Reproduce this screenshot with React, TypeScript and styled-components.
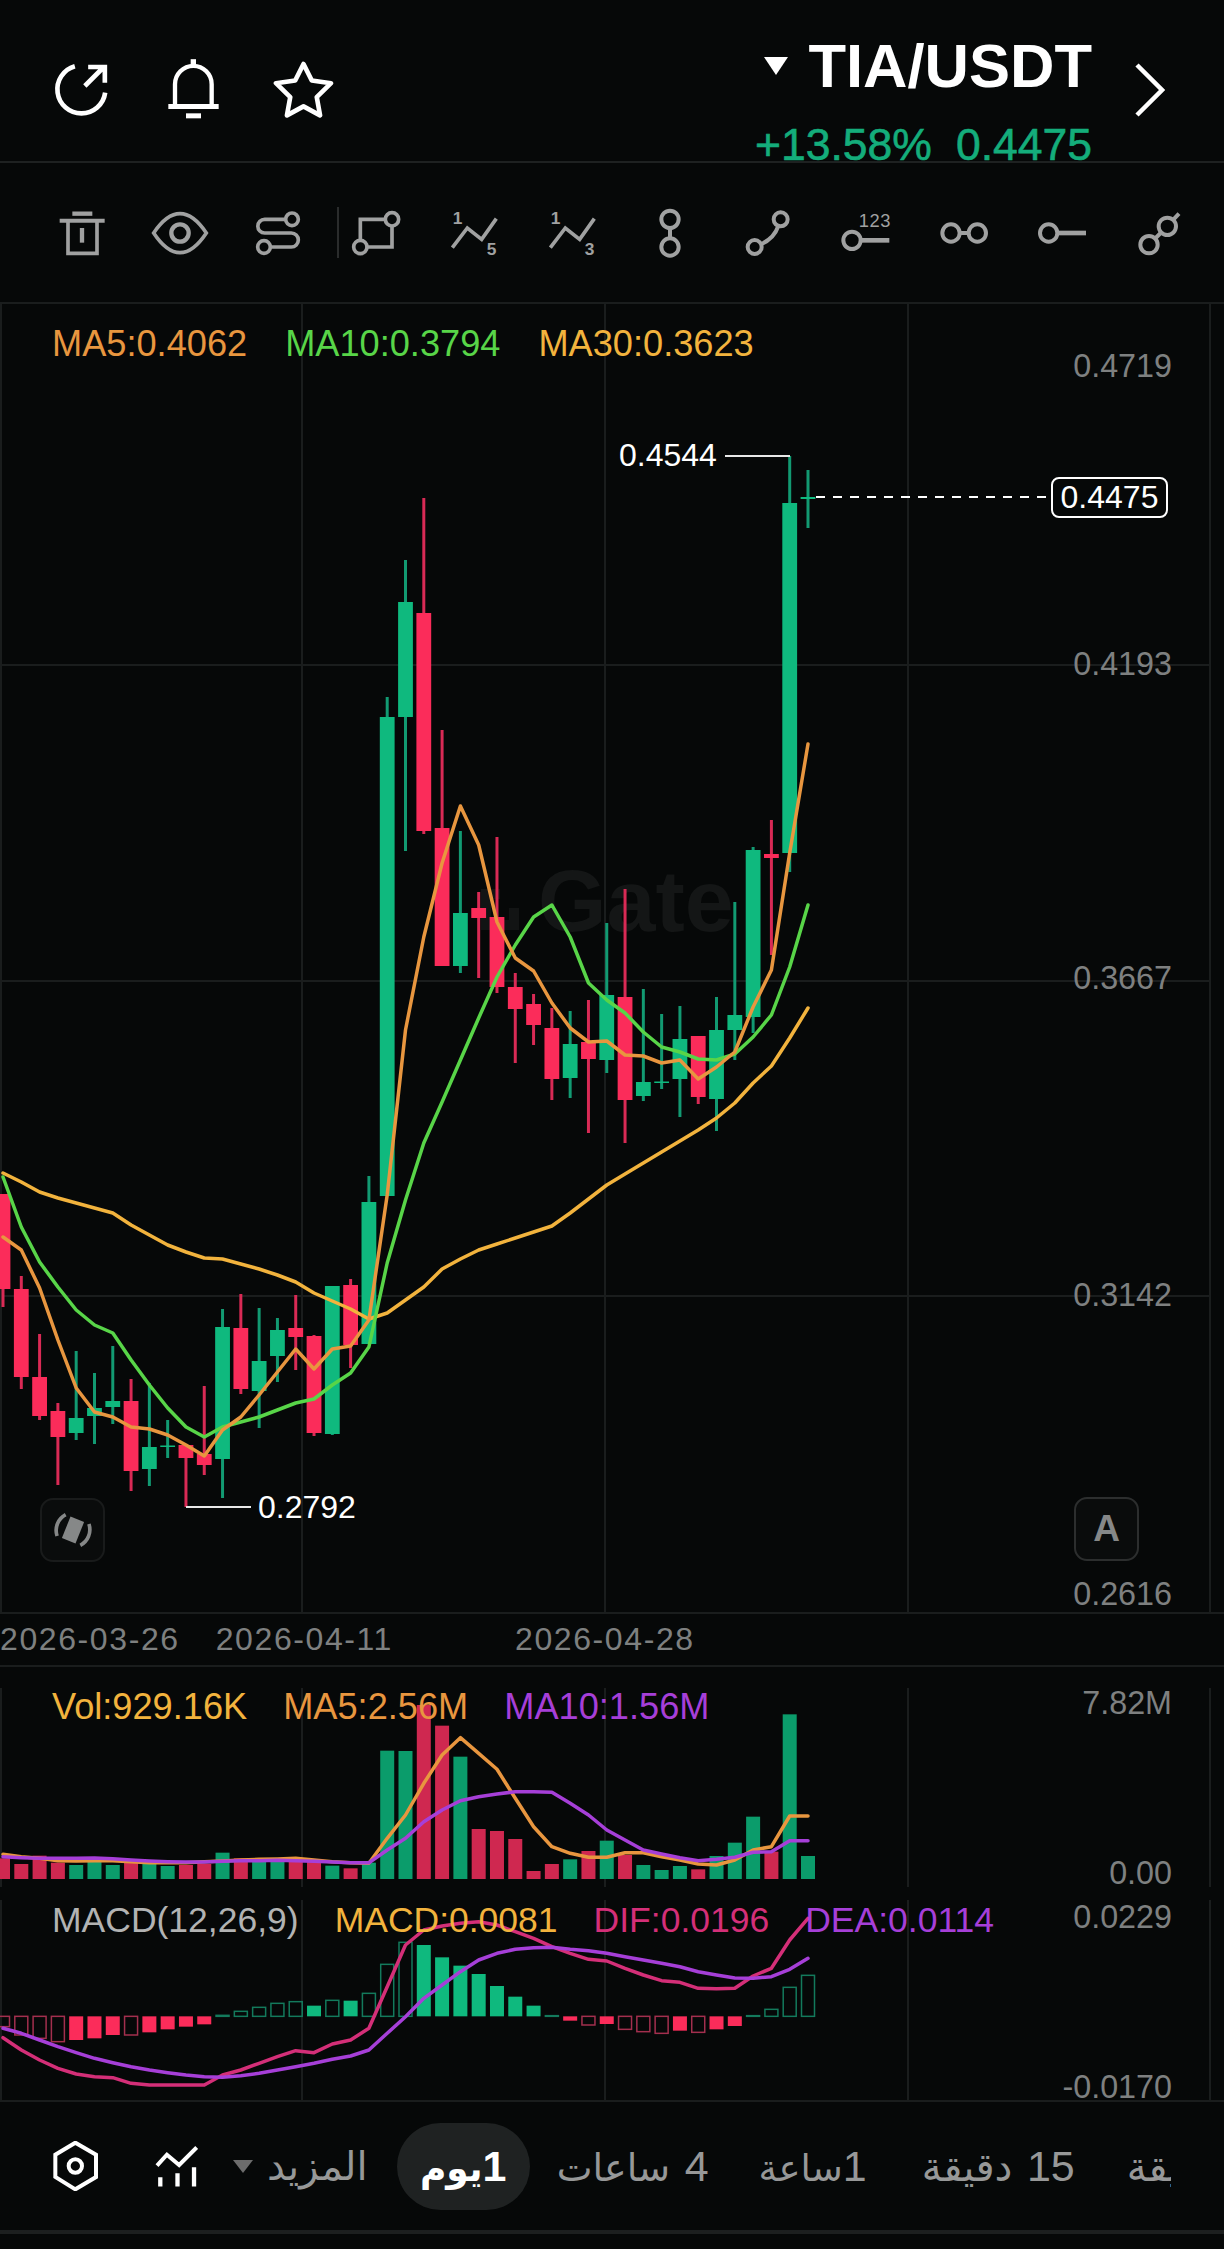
import React from "react";
import styled, { createGlobalStyle } from "styled-components";

const BG = "#060808";
const GRID = "#1a1d1d";
const UP = "#0fb97e";
const DOWN = "#fb2c5a";
const UP_WICK = "#129a72";
const DOWN_WICK = "#d92a55";
const VOL_UP = "#0b9c6b";
const VOL_DOWN = "#cf2850";
const MA_ORANGE = "#e8963f";
const MA_GREEN = "#58d548";
const MA_AMBER = "#f2b33d";
const PURPLE = "#a63fd8";
const PINK = "#d42f78";
const ICON_GREY = "#a0a1a1";

const GlobalStyle = createGlobalStyle`
  html, body { margin: 0; padding: 0; background: ${BG}; }
  body { font-family: "Liberation Sans", "DejaVu Sans", sans-serif; color: #fff; }
  * { box-sizing: border-box; }
`;

const Page = styled.div`
  width: 1224px;
  height: 2249px;
  background: ${BG};
  overflow: hidden;
`;

/* header */
const Header = styled.header`
  height: 163px;
  display: flex;
  justify-content: space-between;
  align-items: flex-start;
  border-bottom: 2px solid #1e2121;
`;
const HeaderIcons = styled.div`
  display: flex;
  gap: 53px;
  padding: 58px 0 0 53px;
  align-items: center;
`;
const RefreshSvg = styled.svg`width: 57px; height: 55px;`;
const BellSvg = styled.svg`width: 55px; height: 62px; margin: 0 -2px 0 2.5px;`;
const StarSvg = styled.svg`width: 63px; height: 58px;`;
const Pair = styled.div`
  display: flex;
  padding-right: 59px;
`;
const PairInfo = styled.div`
  display: flex;
  flex-direction: column;
  align-items: flex-end;
  padding-top: 36px;
`;
const TitleRow = styled.div`
  display: flex;
  align-items: flex-start;
`;
const TitleCaret = styled.span`
  width: 0;
  height: 0;
  margin: 21px 20px 0 0;
  border-left: 12.5px solid transparent;
  border-right: 12.5px solid transparent;
  border-top: 18px solid #fff;
`;
const Title = styled.div`
  font-size: 61.5px;
  line-height: 60px;
  font-weight: 700;
  color: #fff;
`;
const Stats = styled.div`
  display: flex;
  gap: 24px;
  margin-top: 30px;
  font-size: 44.5px;
  line-height: 38px;
  color: #14ad7b;
  -webkit-text-stroke: 0.6px #14ad7b;
`;
const Chevron = styled.svg`
  width: 30px;
  height: 54px;
  margin: 63px 0 0 43px;
`;

/* drawing tools */
const Toolbar = styled.div`
  height: 141px;
  display: flex;
  align-items: center;
  padding-left: 33px;
  border-bottom: 2px solid #1a1d1d;
`;
const Tool = styled.div`
  width: 98px;
  display: flex;
  justify-content: center;
  flex-shrink: 0;
`;
const ToolSvg = styled.svg<{ $sw?: number }>`
  width: 60px;
  height: 60px;
  fill: none;
  stroke: ${ICON_GREY};
  stroke-width: ${(p) => p.$sw ?? 11};
`;
const ToolDigit = styled.text<{ $bold?: boolean }>`
  fill: ${ICON_GREY};
  stroke: none;
  font-family: "Liberation Sans", sans-serif;
  font-size: ${(p) => (p.$bold ? 52 : 55)}px;
  font-weight: ${(p) => (p.$bold ? 700 : 400)};
`;
const Divider = styled.div`
  width: 2px;
  height: 51px;
  margin: 0 -12px 0 10px;
  background: #2a2c2c;
  flex-shrink: 0;
`;

/* panes */
const Pane = styled.section<{ $h: number; $mt?: number }>`
  position: relative;
  height: ${(p) => p.$h}px;
  margin-top: ${(p) => p.$mt ?? 0}px;
`;
const PaneSvg = styled.svg`
  position: absolute;
  inset: 0;
  width: 1224px;
  height: 100%;
`;
const Legend = styled.div<{ $pt?: number; $lh: number; $fs?: number; $gap?: number }>`
  position: relative;
  display: flex;
  gap: ${(p) => p.$gap ?? 38}px;
  padding: ${(p) => p.$pt ?? 0}px 0 0 52px;
  font-size: ${(p) => p.$fs ?? 36.2}px;
  line-height: ${(p) => p.$lh}px;
  white-space: nowrap;
`;
const LegendItem = styled.span<{ $c: string }>`
  color: ${(p) => p.$c};
`;
const AxisLabel = styled.div<{ $y: number }>`
  position: absolute;
  right: 52px;
  top: ${(p) => p.$y - 18}px;
  font-size: 32.3px;
  line-height: 36px;
  color: #7e8080;
`;
const Extreme = styled.div<{ $x: number; $y: number }>`
  position: absolute;
  left: ${(p) => p.$x}px;
  top: ${(p) => p.$y - 18}px;
  font-size: 32px;
  line-height: 36px;
  color: #fff;
`;
const PriceTag = styled.div`
  position: absolute;
  left: 1051px;
  top: 173px;
  width: 117px;
  height: 41px;
  display: flex;
  align-items: center;
  justify-content: center;
  border: 2px solid #fff;
  border-radius: 8px;
  background: ${BG};
  font-size: 32px;
  color: #fff;
`;
const FloatButton = styled.div<{ $x: number; $y: number; $line: string }>`
  position: absolute;
  left: ${(p) => p.$x}px;
  top: ${(p) => p.$y}px;
  width: 65px;
  height: 64px;
  display: flex;
  align-items: center;
  justify-content: center;
  border: 2px solid ${(p) => p.$line};
  border-radius: 13px;
  background: #0a0c0c;
  font-size: 37px;
  font-weight: 700;
  color: #868888;
`;
const SyncSvg = styled.svg`width: 46px; height: 46px;`;

const XAxis = styled.div`
  height: 55px;
  display: flex;
  align-items: center;
  border-top: 2px solid #1a1d1d;
  border-bottom: 2px solid #1a1d1d;
  font-size: 32px;
  color: #7e8080;
  white-space: nowrap;
`;
const DateLabel = styled.span<{ $ml: number }>`
  margin-left: ${(p) => p.$ml}px;
  letter-spacing: 1.6px;
`;

/* bottom bar */
const BottomBar = styled.nav`
  height: 134px;
  display: flex;
  align-items: center;
  padding: 0 53px;
  border-top: 2px solid #1a1d1d;
  border-bottom: 4px solid #1c1f1f;
`;
const HexSvg = styled.svg`width: 45px; height: 50px; flex-shrink: 0;`;
const LinesSvg = styled.svg`width: 43px; height: 42px; margin-left: 57px; flex-shrink: 0;`;
const MoreCaret = styled.span`
  width: 0;
  height: 0;
  margin-left: 35px;
  flex-shrink: 0;
  border-left: 10px solid transparent;
  border-right: 10px solid transparent;
  border-top: 13px solid #6c6c6c;
`;
const Tabs = styled.div`
  flex: 1;
  display: flex;
  align-items: center;
  overflow: hidden;
  margin-left: 14px;
`;
const Tab = styled.div<{ $active?: boolean; $ml?: number }>`
  direction: rtl;
  flex-shrink: 0;
  white-space: nowrap;
  margin-left: ${(p) => p.$ml ?? 0}px;
  font-size: 38px;
  line-height: 87px;
  height: 87px;
  word-spacing: 4px;
  color: ${(p) => (p.$active ? "#fff" : "#979898")};
  font-weight: ${(p) => (p.$active ? 700 : 400)};
  ${(p) =>
    p.$active
      ? `width: 133px; text-align: center; border-radius: 44px; background: #1f2222;`
      : ""}
`;
const Num = styled.span`
  font-size: 43px;
`;
const Word = styled.span<{ $fs?: number }>`
  font-size: ${(p) => p.$fs ?? 38}px;
`;

/* data */
type C = [number, number, number, number, 0 | 1];
const candles: C[] = [
  [1194, 1289, 1194, 1307, 0], [1289, 1377, 1276, 1389, 0], [1377, 1416, 1334, 1420, 0], [1411, 1437, 1403, 1485, 0],
  [1418, 1433, 1351, 1440, 1], [1408, 1416, 1373, 1444, 1], [1401, 1407, 1346, 1424, 1], [1401, 1471, 1379, 1491, 0],
  [1447, 1469, 1383, 1486, 1], [1445.5, 1447, 1420, 1458, 1], [1445, 1458, 1445, 1507, 0], [1454, 1465, 1386, 1475, 0],
  [1327, 1459, 1309, 1498, 1], [1328, 1389, 1294, 1394, 0], [1361, 1391, 1308, 1428, 1], [1330, 1356, 1318, 1382, 1],
  [1328, 1337, 1295, 1370, 0], [1336, 1433, 1335, 1436, 0], [1286, 1434, 1286, 1435, 1], [1285, 1345, 1279, 1368, 0],
  [1202, 1344, 1176, 1344, 1], [717, 1196, 697, 1196, 1], [602, 717, 560, 851, 1], [613, 831, 498, 834, 0],
  [828, 966, 730, 966, 0], [913, 966, 831, 973, 1], [908, 918, 892, 978, 0], [917, 987, 837, 993, 0],
  [987, 1009, 973, 1063, 0], [1004, 1025, 994, 1045, 0], [1028, 1079, 1008, 1100, 0], [1044, 1078, 1011, 1098, 1],
  [1042, 1059, 1000, 1133, 0], [995, 1060, 923, 1073, 1], [997, 1100, 889, 1143, 0], [1082, 1096, 989, 1101, 1],
  [1081.5, 1083, 1014, 1089, 1], [1039, 1079, 1006, 1117, 1], [1036, 1097, 1036, 1104, 0], [1030, 1099, 997, 1131, 1],
  [1015, 1030, 902, 1060, 1], [850, 1017, 847, 1033, 1], [854, 858, 820, 955, 0], [503, 853, 456, 872, 1],
  [497, 499, 470, 528, 1],
];

const ma5 = [1237, 1250, 1288, 1340, 1388, 1412, 1417, 1427, 1429, 1435, 1445, 1456, 1430, 1417, 1395, 1372, 1349, 1369, 1349, 1346, 1320, 1195, 1030, 937, 863, 806, 845, 922, 958, 971, 1003, 1028, 1042, 1041, 1055, 1056, 1063, 1060, 1079, 1067, 1052, 1007, 970, 853, 744];
const ma10 = [1177, 1227, 1262, 1287, 1310, 1325, 1333, 1360, 1385, 1408, 1427, 1437, 1427, 1422, 1417, 1410, 1403, 1399, 1385, 1373, 1347, 1263, 1200, 1143, 1102, 1060, 1018, 977, 945, 917, 905, 937, 983, 1000, 1013, 1032, 1047, 1052, 1059, 1060, 1054, 1037, 1015, 967, 905];
const ma30 = [1173, 1182, 1192, 1198, 1203, 1208, 1213, 1225, 1235, 1245, 1252, 1258, 1259, 1264, 1269, 1275, 1282, 1293, 1301, 1309, 1319, 1313, 1300, 1287, 1269, 1259, 1250, 1244, 1238, 1232, 1226, 1213, 1199, 1185, 1174, 1163, 1152, 1141, 1130, 1118, 1103, 1083, 1066, 1038, 1008];

const volTops = [565, 582, 557, 578, 585, 572, 585, 578, 575, 588, 585, 582, 548, 565, 570, 570, 565, 570, 587, 595, 578, 242, 243, 105, 167, 260, 477, 483, 507, 603, 582, 568, 543, 512, 555, 585, 600, 588, 598, 558, 518, 440, 545, 133, 558];
const volMa5 = [553, 560, 565, 572, 573, 572, 572, 575, 578, 578, 578, 575, 573, 570, 568, 567, 565, 570, 575, 578, 580, 505, 435, 340, 255, 203, 250, 298, 385, 470, 530, 550, 562, 562, 548, 548, 560, 570, 582, 585, 570, 540, 530, 438, 438];
const volMa10 = [560, 563, 565, 565, 565, 564, 566, 570, 573, 575, 576, 576, 574, 572, 572, 571, 572, 574, 576, 578, 578, 540, 505, 455, 420, 392, 380, 372, 365, 365, 367, 400, 435, 480, 510, 540, 552, 563, 572, 568, 562, 547, 545, 512, 512];

// value (in zoom units, 3 per pixel) and filled flag
const macdBars: [number, boolean][] = [
  [1070, false], [1095, false], [1105, false], [1115, false], [1110, true], [1105, true], [1095, true], [1095, false],
  [1087, true], [1078, true], [1070, true], [1063, true], [1036, false], [1024, false], [1012, false], [1000, false],
  [995, false], [1007, true], [991, false], [992, true], [970, false], [883, false], [817, false], [825, true],
  [862, true], [887, true], [912, true], [948, true], [980, true], [1007, true], [1037, false], [1052, true],
  [1065, false], [1062, true], [1078, false], [1085, false], [1090, false], [1082, true], [1087, false], [1078, true],
  [1068, true], [1037, false], [1018, false], [952, false], [916, false],
];
const dif = [1103, 1140, 1170, 1195, 1212, 1220, 1223, 1240, 1245, 1245, 1245, 1245, 1215, 1200, 1180, 1160, 1142, 1148, 1122, 1110, 1075, 950, 825, 780, 768, 760, 755, 765, 785, 805, 830, 850, 868, 873, 895, 915, 932, 937, 955, 956, 955, 918, 895, 810, 745];
const dea = [1075, 1090, 1110, 1130, 1148, 1165, 1178, 1190, 1200, 1208, 1215, 1220, 1222, 1217, 1210, 1200, 1190, 1180, 1168, 1158, 1140, 1090, 1040, 985, 945, 905, 870, 850, 838, 833, 832, 838, 842, 850, 860, 870, 880, 890, 905, 915, 924, 925, 920, 898, 865];

const px = (i: number) => 3 + (i * 805) / 44;
const lower = (y: number) => 1670 + y / 3;
const toPoints = (ys: number[], f: (y: number) => number = (y) => y) =>
  ys.map((y, i) => `${px(i).toFixed(1)},${f(y).toFixed(1)}`).join(" ");

const Grid = ({ top, bottom }: { top: number; bottom: number }) => (
  <g stroke={GRID} strokeWidth={2}>
    {[1, 302, 605, 908, 1210].map((x) => (
      <line key={x} x1={x} x2={x} y1={top} y2={bottom} />
    ))}
  </g>
);

const Line = ({ points, color, width = 3.5 }: { points: string; color: string; width?: number }) => (
  <polyline points={points} fill="none" stroke={color} strokeWidth={width} strokeLinejoin="round" strokeLinecap="round" />
);

const MainChart = () => (
  <PaneSvg viewBox="0 304 1224 1308" preserveAspectRatio="none">
    <Grid top={304} bottom={1612} />
    <g stroke={GRID} strokeWidth={2}>
      {[665, 981, 1296].map((y) => (
        <line key={y} x1={0} x2={1210} y1={y} y2={y} />
      ))}
    </g>
    <path d="M514 908V925H486V894H500" fill="none" stroke="#121414" strokeWidth={10} />
    <text x={538} y={931} fontFamily='"Liberation Sans", sans-serif' fontSize={88} fontWeight={700} fill="#141616">
      Gate
    </text>
    {candles.map(([t, b, wt, wb, up], i) => {
      const x = px(i);
      return (
        <g key={i}>
          <line x1={x} x2={x} y1={wt} y2={wb} stroke={up ? UP_WICK : DOWN_WICK} strokeWidth={3} />
          <rect x={x - 7.4} y={t} width={14.8} height={Math.max(b - t, 1)} fill={up ? UP : DOWN} />
        </g>
      );
    })}
    <Line points={toPoints(ma30)} color={MA_AMBER} />
    <Line points={toPoints(ma10)} color={MA_GREEN} />
    <Line points={toPoints(ma5)} color={MA_ORANGE} />
    <path d="M790 456H725M186 1507H251" fill="none" stroke="#e8e8e8" strokeWidth={2} />
    <line x1={816} x2={1048} y1={497} y2={497} stroke="#fff" strokeWidth={2} strokeDasharray="9 8" />
  </PaneSvg>
);

const VolumeChart = () => (
  <PaneSvg viewBox="0 1688 1224 199" preserveAspectRatio="none">
    <Grid top={1688} bottom={1887} />
    {volTops.map((t, i) => (
      <rect
        key={i}
        x={px(i) - 7}
        y={lower(t)}
        width={14}
        height={1879 - lower(t)}
        fill={candles[i][4] ? VOL_UP : VOL_DOWN}
      />
    ))}
    <Line points={toPoints(volMa5, lower)} color={MA_ORANGE} />
    <Line points={toPoints(volMa10, lower)} color={PURPLE} />
  </PaneSvg>
);

const MacdChart = () => (
  <PaneSvg viewBox="0 1900 1224 200" preserveAspectRatio="none">
    <Grid top={1900} bottom={2100} />
    {macdBars.map(([v, filled], i) => {
      const y = lower(v);
      const zero = lower(1039);
      const isUp = v < 1039;
      const top = Math.min(y, zero);
      const h = Math.abs(y - zero);
      return filled ? (
        <rect key={i} x={px(i) - 7} y={top} width={14} height={h} fill={isUp ? UP : DOWN} />
      ) : (
        <rect
          key={i}
          x={px(i) - 6.5}
          y={top}
          width={13}
          height={h}
          fill="none"
          stroke={isUp ? "#137a5c" : "#a32f4e"}
          strokeWidth={1.5}
        />
      );
    })}
    <Line points={toPoints(dif, lower)} color={PINK} />
    <Line points={toPoints(dea, lower)} color={PURPLE} />
  </PaneSvg>
);

const App = () => (
  <Page>
    <GlobalStyle />
    <Header>
      <HeaderIcons>
        <RefreshSvg viewBox="70 40 170 165" fill="none" stroke="#fff" strokeWidth={14}>
          <path d="M135 53A72 72 0 1 0 226 132" />
          <path d="M165 112L222 55M175 55H225V102" />
        </RefreshSvg>
        <BellSvg viewBox="405 25 165 185" fill="none" stroke="#fff" strokeWidth={13}>
          <path d="M432 168V103A55 55 0 0 1 542 103V168" />
          <path d="M412 170H563" strokeWidth={15} />
          <path d="M487 28V48" strokeWidth={16} />
          <path d="M465 198H510" strokeWidth={15} />
        </BellSvg>
        <StarSvg viewBox="725 30 190 175" fill="none" stroke="#fff" strokeWidth={14} strokeLinejoin="round">
          <path d="M820 42L845 92L903 100L860 142L870 197L820 170L770 197L780 142L737 100L795 92Z" />
        </StarSvg>
      </HeaderIcons>
      <Pair>
        <PairInfo>
          <TitleRow>
            <TitleCaret />
            <Title>TIA/USDT</Title>
          </TitleRow>
          <Stats>
            <span>+13.58%</span>
            <span>0.4475</span>
          </Stats>
        </PairInfo>
        <Chevron viewBox="0 0 30 54" fill="none" stroke="#fff" strokeWidth={4.5}>
          <path d="M2 2L27 27L2 52" />
        </Chevron>
      </Pair>
    </Header>

    <Toolbar>
      <Tool>
        <ToolSvg viewBox="37 23 180 180">
          <path d="M98 55H158" strokeWidth={13} />
          <path d="M60 76H195" strokeWidth={12} />
          <path d="M85 78V174H172V78" />
          <path d="M127 98V142" strokeWidth={13} />
        </ToolSvg>
      </Tool>
      <Tool>
        <ToolSvg viewBox="335 23 180 180">
          <path d="M346 113Q385 55 425 55Q465 55 504 113Q465 172 425 172Q385 172 346 113Z" />
          <circle cx={425} cy={113} r={26} strokeWidth={13} />
        </ToolSvg>
      </Tool>
      <Tool>
        <ToolSvg viewBox="630 23 180 180">
          <circle cx={762} cy={72} r={19} />
          <circle cx={678} cy={155} r={19} />
          <path d="M744 72H680A20.5 20.5 0 0 0 680 113H760A21 21 0 0 1 760 155H696" />
        </ToolSvg>
      </Tool>
      <Divider />
      <Tool>
        <ToolSvg viewBox="922 23 180 180">
          <circle cx={1060} cy={72} r={20} />
          <circle cx={965} cy={155} r={20} />
          <path d="M1040 72H965V135M985 155H1060V92" />
        </ToolSvg>
      </Tool>
      <Tool>
        <ToolSvg viewBox="1215 23 180 180">
          <polyline points="1240,157 1285,98 1328,132 1372,70" />
          <ToolDigit x={1241} y={85} $bold>1</ToolDigit>
          <ToolDigit x={1343} y={178} $bold>5</ToolDigit>
        </ToolSvg>
      </Tool>
      <Tool>
        <ToolSvg viewBox="1215 23 180 180">
          <polyline points="1240,157 1285,98 1328,132 1372,70" />
          <ToolDigit x={1241} y={85} $bold>1</ToolDigit>
          <ToolDigit x={1343} y={178} $bold>3</ToolDigit>
        </ToolSvg>
      </Tool>
      <Tool>
        <ToolSvg viewBox="-28 23 180 180" $sw={12}>
          <circle cx={62} cy={72} r={26} />
          <circle cx={62} cy={155} r={26} />
          <path d="M62 97V130" />
        </ToolSvg>
      </Tool>
      <Tool>
        <ToolSvg viewBox="257 23 180 180" $sw={12}>
          <circle cx={385} cy={72} r={21} />
          <circle cx={307} cy={155} r={21} />
          <path d="M378 92Q365 130 325 147" />
        </ToolSvg>
      </Tool>
      <Tool>
        <ToolSvg viewBox="542 23 180 180" $sw={12}>
          <circle cx={590} cy={135} r={26} />
          <path d="M615 135H702" strokeWidth={14} />
          <ToolDigit x={610} y={95} textLength={95}>123</ToolDigit>
        </ToolSvg>
      </Tool>
      <Tool>
        <ToolSvg viewBox="825 23 180 180" $sw={12}>
          <circle cx={876} cy={113} r={26} />
          <circle cx={955} cy={113} r={26} />
          <path d="M900 113H930" />
        </ToolSvg>
      </Tool>
      <Tool>
        <ToolSvg viewBox="1110 23 180 180" $sw={12}>
          <circle cx={1160} cy={113} r={26} />
          <path d="M1185 113H1272" strokeWidth={14} />
        </ToolSvg>
      </Tool>
      <Tool>
        <ToolSvg viewBox="1395 23 180 180" $sw={12}>
          <circle cx={1452} cy={148} r={26} />
          <circle cx={1507} cy={93} r={26} />
          <path d="M1472 128L1487 113M1525 73L1542 55" />
        </ToolSvg>
      </Tool>
    </Toolbar>

    <Pane $h={1308}>
      <MainChart />
      <Legend $pt={20} $lh={40}>
        <LegendItem $c={MA_ORANGE}>MA5:0.4062</LegendItem>
        <LegendItem $c={MA_GREEN}>MA10:0.3794</LegendItem>
        <LegendItem $c={MA_AMBER}>MA30:0.3623</LegendItem>
      </Legend>
      <AxisLabel $y={62}>0.4719</AxisLabel>
      <AxisLabel $y={360}>0.4193</AxisLabel>
      <AxisLabel $y={674}>0.3667</AxisLabel>
      <AxisLabel $y={991}>0.3142</AxisLabel>
      <AxisLabel $y={1290}>0.2616</AxisLabel>
      <Extreme $x={619} $y={151}>0.4544</Extreme>
      <Extreme $x={258} $y={1203}>0.2792</Extreme>
      <PriceTag>0.4475</PriceTag>
      <FloatButton $x={40} $y={1194} $line="#191b1b">
        <SyncSvg viewBox="-22 -22 44 44" fill="none" stroke="#868888" strokeWidth={3.5}>
          <g transform="rotate(22)">
            <rect x={-7} y={-11} width={14} height={22} fill="#868888" stroke="none" />
            <path d="M-12 -11A17 17 0 0 0 -12 11M12 -11A17 17 0 0 1 12 11" />
          </g>
        </SyncSvg>
      </FloatButton>
      <FloatButton $x={1074} $y={1193} $line="#2c2e2e">A</FloatButton>
    </Pane>

    <XAxis>
      <DateLabel $ml={0}>2026-03-26</DateLabel>
      <DateLabel $ml={36}>2026-04-11</DateLabel>
      <DateLabel $ml={122}>2026-04-28</DateLabel>
    </XAxis>

    <Pane $h={199} $mt={21}>
      <VolumeChart />
      <Legend $lh={38} $gap={36}>
        <LegendItem $c={MA_AMBER}>Vol:929.16K</LegendItem>
        <LegendItem $c={MA_ORANGE}>MA5:2.56M</LegendItem>
        <LegendItem $c={PURPLE}>MA10:1.56M</LegendItem>
      </Legend>
      <AxisLabel $y={15}>7.82M</AxisLabel>
      <AxisLabel $y={185}>0.00</AxisLabel>
    </Pane>

    <Pane $h={200} $mt={13}>
      <MacdChart />
      <Legend $lh={40} $fs={35.5} $gap={36}>
        <LegendItem $c="#b2b3b3">MACD(12,26,9)</LegendItem>
        <LegendItem $c={MA_AMBER}>MACD:0.0081</LegendItem>
        <LegendItem $c={PINK}>DIF:0.0196</LegendItem>
        <LegendItem $c={PURPLE}>DEA:0.0114</LegendItem>
      </Legend>
      <AxisLabel $y={17}>0.0229</AxisLabel>
      <AxisLabel $y={187}>-0.0170</AxisLabel>
    </Pane>

    <BottomBar>
      <HexSvg viewBox="68 37 135 150" fill="none" stroke="#fff" strokeWidth={12}>
        <path d="M135 42L197 78V145L135 182L75 145V78Z" />
        <circle cx={135} cy={112} r={20} />
      </HexSvg>
      <LinesSvg viewBox="372 43 130 126" fill="none" stroke="#fff" strokeWidth={12}>
        <polyline points="378,105 408,72 445,103 498,50" />
        <path d="M388 140V168M440 128V168M490 110V168" strokeWidth={13} />
      </LinesSvg>
      <MoreCaret />
      <Tabs>
        <Tab><Word $fs={40}>المزيد</Word></Tab>
        <Tab $active $ml={29}><Num>1</Num><Word $fs={36}>يوم</Word></Tab>
        <Tab $ml={27}><Num>4</Num> <Word>ساعات</Word></Tab>
        <Tab $ml={50}><Num>1</Num><Word $fs={37}>ساعة</Word></Tab>
        <Tab $ml={55}><Num>15</Num> <Word $fs={40}>دقيقة</Word></Tab>
        <Tab $ml={52}><Num>5</Num> <Word $fs={40}>دقيقة</Word></Tab>
      </Tabs>
    </BottomBar>
  </Page>
);

export default App;
